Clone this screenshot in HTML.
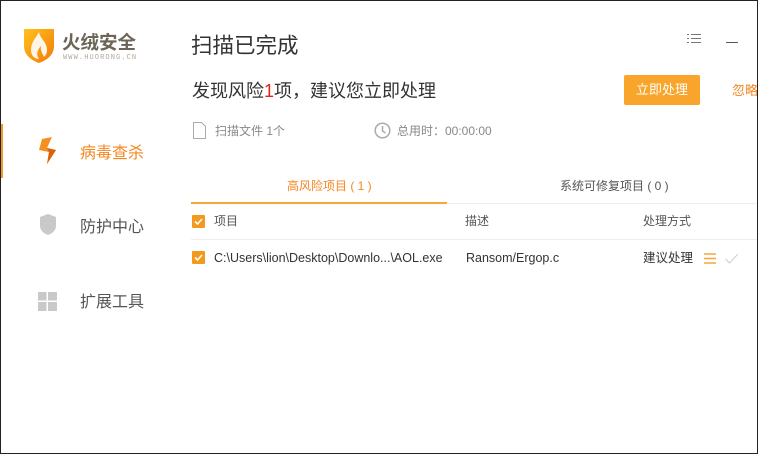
<!DOCTYPE html><html><head><meta charset="utf-8"><style>
*{margin:0;padding:0;box-sizing:border-box}
body{width:758px;height:454px;overflow:hidden;background:#fff;font-family:"Liberation Sans","Noto Sans CJK SC",sans-serif;position:relative}
.a{position:absolute;white-space:nowrap;line-height:1}
#frame{position:absolute;left:0;top:0;width:758px;height:454px;border:1px solid #222;pointer-events:none}
.cb{position:absolute;width:13px;height:13px;background:#f39a1e;border-radius:1px}
.cb svg{position:absolute;left:0;top:0}
</style></head><body>
<svg class="a" style="left:23px;top:26px" width="32" height="38" viewBox="0 0 32 38">
<defs><linearGradient id="g" x1="0" y1="0" x2="1" y2="1"><stop offset="0" stop-color="#ffc21a"/><stop offset="1" stop-color="#f27a0c"/></linearGradient></defs>
<path d="M1 3 L31 3 L31 20 C31 30 22 35 16 37 C10 35 1 30 1 20Z" fill="url(#g)"/>
<path d="M16 6 C13 12 8 16 8 24 C8 30 12 33 16 33 C13 29 14 24 18 20 C17 25 20 28 21 31 C24 28 25 24 23 19 C21 14 17 12 16 6Z" fill="#fff" opacity=".9"/>
</svg>
<div class="a" style="left:62px;top:34px;font-size:18.5px;color:#6b6457;font-weight:bold">火绒安全</div>
<div class="a" style="left:63px;top:55px;font-size:7px;color:#b0a99a;letter-spacing:1.1px;font-family:'Liberation Mono',monospace">WWW.HUORONG.CN</div>
<div class="a" style="left:0;top:124px;width:3px;height:54px;background:#f39a1e"></div>
<svg class="a" style="left:38px;top:137px" width="20" height="28" viewBox="0 0 20 28"><path d="M4 2 L14 0 L9 11 L18 13 L9 27 L11 15 L1 13Z" fill="#f5901e"/><path d="M9 11 L18 13 L9 27 L11 15Z" fill="#d9620a"/></svg>
<div class="a" style="left:80px;top:146px;font-size:16px;color:#f5861f">病毒查杀</div>
<svg class="a" style="left:39px;top:214px" width="18" height="22" viewBox="0 0 18 22"><path d="M9 0 L17 3 L17 12 C17 17 12 20 9 21 C6 20 1 17 1 12 L1 3Z" fill="#c9c9c9"/></svg>
<div class="a" style="left:80px;top:220px;font-size:16px;color:#555">防护中心</div>
<svg class="a" style="left:38px;top:292px" width="19" height="19" viewBox="0 0 19 19" fill="#c9c9c9"><rect width="8.5" height="8.5"/><rect x="10" width="9" height="8.5"/><rect y="10" width="8.5" height="9"/><rect x="10" y="10" width="9" height="9"/></svg>
<div class="a" style="left:80px;top:295px;font-size:16px;color:#555">扩展工具</div>

<div class="a" style="left:191px;top:36px;font-size:21.5px;color:#333">扫描已完成</div>
<svg class="a" style="left:687px;top:33px" width="14" height="11" viewBox="0 0 14 11" stroke="#777" stroke-width="1"><path d="M0 1.5h2M4 1.5h10M0 5.5h2M4 5.5h10M0 9.5h2M4 9.5h10"/></svg>
<div class="a" style="left:726px;top:42px;width:12px;height:1px;background:#555"></div>
<div class="a" style="left:192px;top:82px;font-size:18px;color:#333">发现风险<span style="color:#e3221b">1</span>项，建议您立即处理</div>
<div class="a" style="left:624px;top:75px;width:76px;height:30px;background:#f9a42a;border-radius:2px;color:#fff;font-size:13px;line-height:30px;text-align:center">立即处理</div>
<div class="a" style="left:732px;top:84px;font-size:13px;color:#f5861f">忽略</div>
<svg class="a" style="left:193px;top:122px" width="13" height="17" viewBox="0 0 13 17" fill="none" stroke="#aaa"><path d="M0.5 0.5h8l4 4v12h-12z"/></svg>
<div class="a" style="left:215px;top:125px;font-size:12px;color:#888">扫描文件 1个</div>
<svg class="a" style="left:374px;top:122px" width="17" height="17" viewBox="0 0 17 17" fill="none" stroke="#aaa" stroke-width="1.5"><circle cx="8.5" cy="8.5" r="7.3"/><path d="M8.5 4v5l3 2"/></svg>
<div class="a" style="left:397px;top:125px;font-size:12px;color:#888">总用时：00:00:00</div>
<div class="a" style="left:287px;top:180px;font-size:12px;color:#f5861f">高风险项目 ( 1 )</div>
<div class="a" style="left:560px;top:180px;font-size:12px;color:#555">系统可修复项目 ( 0 )</div>
<div class="a" style="left:191px;top:202px;width:256px;height:2px;background:#f7a539"></div>
<div class="a" style="left:447px;top:203px;width:311px;height:1px;background:#eee"></div>
<div class="cb" style="left:192px;top:215px"><svg width="13" height="13"><path d="M3 6.5l2.5 2.5 4.5-5" stroke="#fff" stroke-width="1.6" fill="none"/></svg></div>
<div class="a" style="left:214px;top:215px;font-size:12px;color:#555">项目</div>
<div class="a" style="left:465px;top:215px;font-size:12px;color:#555">描述</div>
<div class="a" style="left:643px;top:215px;font-size:12px;color:#555">处理方式</div>
<div class="a" style="left:191px;top:239px;width:567px;height:1px;background:#eee"></div>
<div class="cb" style="left:192px;top:251px"><svg width="13" height="13"><path d="M3 6.5l2.5 2.5 4.5-5" stroke="#fff" stroke-width="1.6" fill="none"/></svg></div>
<div class="a" style="left:214px;top:252px;font-size:12.5px;color:#333">C:\Users\lion\Desktop\Downlo...\AOL.exe</div>
<div class="a" style="left:466px;top:252px;font-size:12.5px;color:#333">Ransom/Ergop.c</div>
<div class="a" style="left:643px;top:252px;font-size:12.5px;color:#333">建议处理</div>
<svg class="a" style="left:704px;top:253px" width="12" height="11" viewBox="0 0 12 11" stroke="#f7a539" stroke-width="1.5"><path d="M0 1h12M0 5.5h12M0 10h12"/></svg>
<svg class="a" style="left:725px;top:254px" width="13" height="10" viewBox="0 0 13 10" stroke="#ccc" fill="none"><path d="M0.5 5l4 4 8-8.5"/></svg>
<div id="frame"></div>
</body></html>
